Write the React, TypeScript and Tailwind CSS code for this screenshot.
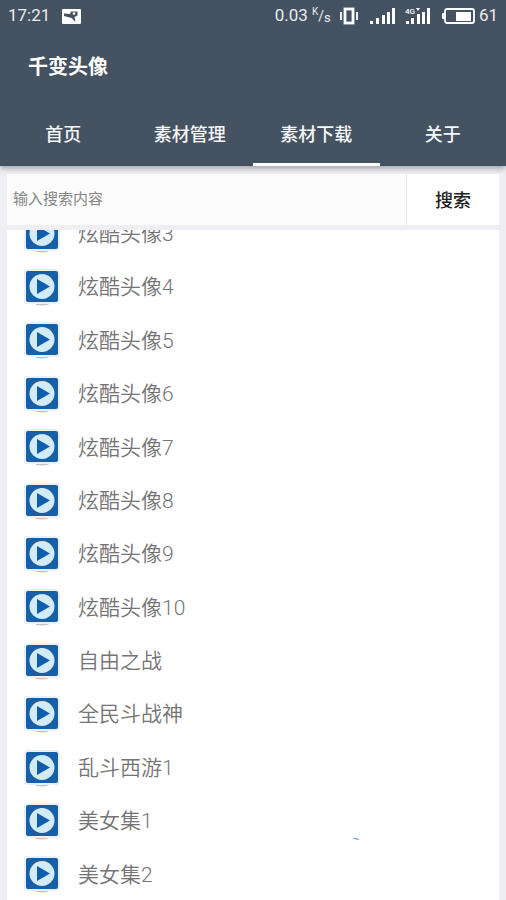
import { useState } from "react";

const tabs = ["首页", "素材管理", "素材下载", "关于"];

const packs = [
  "炫酷头像3",
  "炫酷头像4",
  "炫酷头像5",
  "炫酷头像6",
  "炫酷头像7",
  "炫酷头像8",
  "炫酷头像9",
  "炫酷头像10",
  "自由之战",
  "全民斗战神",
  "乱斗西游1",
  "美女集1",
  "美女集2",
];

function PictureIcon() {
  return (
    <svg width="19" height="15" viewBox="0 0 19 15" aria-hidden="true">
      <rect width="19" height="15" rx="1" fill="#fff" />
      <path d="M2 4.500L8 5L9 2.500H15.500V6.500L12.500 8L13.500 13L9.500 9L2 7Z" fill="#455261" />
      <circle cx="12" cy="4.500" r="1.300" fill="#fff" />
    </svg>
  );
}

function VibrateIcon() {
  return (
    <svg width="18" height="18" viewBox="0 0 18 18" fill="none" stroke="#fff" aria-hidden="true">
      <rect x="5" y="2" width="8" height="14" strokeWidth="2.800" />
      <path d="M1 5V13M17 5V13" strokeWidth="1.800" />
    </svg>
  );
}

function SignalIcon() {
  return (
    <svg width="27" height="17" viewBox="0 0 27 17" fill="#fff" aria-hidden="true">
      <rect x="0" y="13" width="3" height="3" />
      <rect x="6" y="10" width="3" height="6" />
      <rect x="12" y="7" width="3" height="9" />
      <rect x="17" y="4" width="3" height="12" />
      <rect x="22" y="0" width="3" height="16" />
    </svg>
  );
}

function Signal4GIcon() {
  return (
    <svg width="27" height="17" viewBox="0 0 27 17" fill="#fff" aria-hidden="true">
      <text x="0" y="6" fontSize="8" fontWeight="500" fontFamily="Roboto, sans-serif">4G</text>
      <path d="M11 0H15L13 3Z" />
      <rect x="1" y="13" width="3" height="3" />
      <rect x="6" y="10" width="3" height="6" />
      <rect x="12" y="6" width="3" height="10" />
      <rect x="17" y="4" width="3" height="12" />
      <rect x="22" y="0" width="3" height="16" />
    </svg>
  );
}

function BatteryIcon() {
  return (
    <svg width="33" height="16" viewBox="0 0 33 16" aria-hidden="true">
      <rect x="3" y="1" width="29" height="14" rx="2" fill="none" stroke="#fff" strokeWidth="1.800" />
      <rect x="0" y="5" width="3" height="6" rx="1" fill="#fff" />
      <rect x="14" y="4" width="15" height="9" fill="#fff" />
    </svg>
  );
}

function PlayIcon() {
  return (
    <svg className="shrink-0" width="36" height="38" viewBox="0 0 36 38" aria-hidden="true">
      <ellipse cx="18" cy="35" rx="7" ry="1.500" fill="#c3c5c8" />
      <rect x="0" y="0" width="36" height="35" rx="3" fill="#e9f1f8" />
      <rect x="2" y="2" width="32" height="31" rx="2" fill="#1560a6" />
      <circle cx="18" cy="17.500" r="12.500" fill="#d3eaf7" />
      <path d="M13 10V25L26 17.500Z" fill="#0e5cab" />
    </svg>
  );
}

export default function App() {
  const [active, setActive] = useState(2);
  const [query, setQuery] = useState("");

  return (
    <div className="relative flex min-h-screen flex-col bg-[#eeeef3] font-[Roboto,'Noto_Sans_CJK_SC',sans-serif]">
      <header className="relative bg-[#455261] text-white shadow-[0_2px_6px_rgba(0,0,0,0.35)]">
        <div className="flex h-8 items-center justify-between px-2 text-[17px]">
          <div className="flex items-center gap-3 text-[#e9edf0]">
            <span>17:21</span>
            <PictureIcon />
          </div>
          <div className="flex items-center text-[#e9edf0]">
            <span>0.03</span>
            <span className="mr-2 ml-1 flex w-5 items-center leading-3">
              <span className="pb-2 text-[10px]">K</span>
              <span className="text-sm">/</span>
              <span className="pt-1 text-[13px]">s</span>
            </span>
            <VibrateIcon />
            <span className="ml-3">
              <SignalIcon />
            </span>
            <span className="ml-2">
              <Signal4GIcon />
            </span>
            <span className="mr-1 ml-2.5">
              <BatteryIcon />
            </span>
            <span>61</span>
          </div>
        </div>
        <h1 className="flex h-17 items-center px-7 pt-0.5 text-xl font-bold">千变头像</h1>
        <nav className="grid h-[66px] grid-cols-4">
          {tabs.map((tab, i) => (
            <button
              key={tab}
              type="button"
              onClick={() => setActive(i)}
              aria-current={i === active ? "page" : undefined}
              className={
                "border-b-3 pt-1.5 text-lg font-medium text-[#f4f7f9] " +
                (i === active ? "border-white" : "border-transparent")
              }
            >
              {tab}
            </button>
          ))}
        </nav>
      </header>

      <form
        className="mx-[7px] mt-2 flex h-[51px] bg-white"
        onSubmit={(e) => e.preventDefault()}
      >
        <input
          type="search"
          aria-label="输入搜索内容"
          placeholder="输入搜索内容"
          value={query}
          onChange={(e) => setQuery(e.target.value)}
          className="min-w-0 flex-1 border-r border-[#e9e9ee] bg-[#fcfcfd] px-1.5 text-[15px] outline-none placeholder:text-[#858585]"
        />
        <button type="submit" className="w-[92px] pt-0.5 text-lg font-medium text-[#202020]">
          搜索
        </button>
      </form>

      <main className="mx-[7px] mt-[5px] flex flex-1 flex-col overflow-hidden bg-white">
        <ul className="-mt-6 flex flex-1 flex-col">
          {packs.map((name) => (
            <li key={name} className="flex min-h-13 flex-1">
              <button
                type="button"
                className="flex w-full items-center gap-[18px] px-[17px] pt-1 text-left text-[21px] font-[350] text-[#747474]"
              >
                <PlayIcon />
                {name}
              </button>
            </li>
          ))}
        </ul>
      </main>

      <svg
        className="absolute right-[145px] bottom-[59px]"
        width="10"
        height="4"
        viewBox="0 0 10 4"
        aria-hidden="true"
      >
        <path d="M1 1Q5 0 9 3Q5 3 1 1Z" fill="#5fa3d3" />
      </svg>
    </div>
  );
}
